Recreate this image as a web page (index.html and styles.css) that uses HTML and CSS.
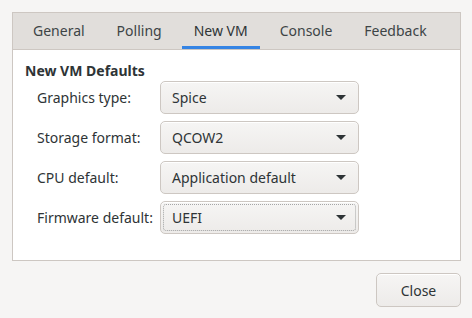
FILE: index.html
```html
<!DOCTYPE html>
<html lang="en">

<head>
    <meta charset="utf-8">
    <title>Preferences</title>
    <link rel="stylesheet" href="styles.css">
</head>

<body>
    <div class="dialog">
        <section class="notebook">
            <nav class="tabs">
                <button class="tab">General</button>
                <button class="tab">Polling</button>
                <button class="tab valgt">New VM</button>
                <button class="tab">Console</button>
                <button class="tab">Feedback</button>
            </nav>
            <div class="page">
                <h3>New VM Defaults</h3>
                <div class="felter">
                    <label>Graphics type:</label>
                    <div class="combo"><span>Spice</span><i class="pil"></i></div>
                    <label>Storage format:</label>
                    <div class="combo"><span>QCOW2</span><i class="pil"></i></div>
                    <label>CPU default:</label>
                    <div class="combo"><span>Application default</span><i class="pil"></i></div>
                    <label>Firmware default:</label>
                    <div class="combo fokus"><span>UEFI</span><i class="pil"></i></div>
                </div>
            </div>
        </section>
        <footer>
            <button class="luk">Close</button>
        </footer>
    </div>
</body></html>
```

FILE: styles.css
```css
* {
    box-sizing: border-box;
}

body {
    margin: 0;
    background-color: #f6f5f4;
    font-family: 'Noto Sans', 'Open Sans', sans-serif;
    font-size: 14px;
    color: #2e3436;
}

.dialog {
    padding: 12px 11px 11px 12px;
}

.notebook {
    border: 1px solid #cdc7c2;
    background-color: #ffffff;
}

.tabs {
    display: flex;
    gap: 8px;
    padding-left: 8px;
    height: 37px;
    background-color: #e1dedb;
    border-bottom: 1px solid #cdc7c2;
}

.tab {
    border: 0;
    background: none;
    padding: 1px 12px 0 12px;
    margin: 0;
    font: inherit;
    color: #3d4446;
    border-bottom: 3px solid transparent;
}

.tab.valgt {
    border-bottom-color: #3584e4;
    color: #2e3436;
}

.page {
    padding: 11px 12px 26px 12px;
}

h3 {
    margin: 0;
    font-size: 14px;
    font-weight: bold;
    line-height: 20px;
}

.felter {
    display: grid;
    grid-template-columns: 117px 199px;
    grid-auto-rows: 33px;
    column-gap: 6px;
    row-gap: 7px;
    margin-left: 12px;
}

label {
    display: flex;
    align-items: center;
    white-space: nowrap;
}

.combo {
    position: relative;
    display: flex;
    align-items: center;
    justify-content: space-between;
    padding: 0 11px;
    border: 1px solid #cdc7c2;
    border-radius: 5px;
    background: linear-gradient(#f6f5f4, #edebe9);
    box-shadow: inset 0 1px #ffffff;
}

.fokus::after {
    content: "";
    position: absolute;
    inset: 2px;
    border: 1px dotted rgba(46, 52, 54, 0.4);
    border-radius: 3px;
}

.pil {
    width: 0;
    height: 0;
    border-left: 5px solid transparent;
    border-right: 5px solid transparent;
    border-top: 5px solid #2e3436;
    margin-right: 1px;
}

footer {
    display: flex;
    justify-content: flex-end;
    margin-top: 12px;
}

.luk {
    width: 85px;
    height: 34px;
    border: 1px solid #cdc7c2;
    border-radius: 5px;
    background: linear-gradient(#f6f5f4, #edebe9);
    box-shadow: inset 0 1px #ffffff;
    font: inherit;
    color: #2e3436;
}
```
